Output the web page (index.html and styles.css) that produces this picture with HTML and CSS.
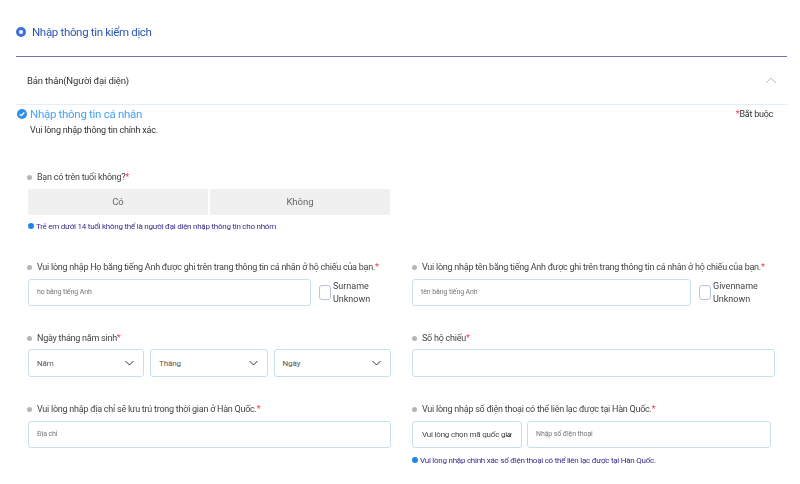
FILE: index.html
```html
<!DOCTYPE html>
<html lang="en">
<head>
  <meta charset="UTF-8" />
  <title>Nhập thông tin kiểm dịch</title>
  <link rel="stylesheet" href="styles.css">
</head>
<body>
  <div class="page">

    <!-- Step title -->
    <div class="step-title">
      <span class="step-dot"></span>
      <span>Nhập thông tin kiểm dịch</span>
    </div>

    <!-- Accordion head -->
    <div class="accordion-head">
      <span>Bản thân(Người đại diện)</span>
      <svg class="chevron-up" width="12" height="7" viewBox="0 0 12 7"><path d="M1 6l5-5 5 5" fill="none" stroke="#a9c4dc" stroke-width="1"/></svg>
    </div>

    <!-- Section head -->
    <div class="section-head">
      <div class="section-title">
        <svg width="10" height="10" viewBox="0 0 10 10"><circle cx="5" cy="5" r="5" fill="#2f8fe8"/><path d="M2.6 5.1l1.7 1.6 3-3.2" fill="none" stroke="#fff" stroke-width="1.2"/></svg>
        <span>Nhập thông tin cá nhân</span>
      </div>
      <div class="required-note"><span class="star">*</span>Bắt buộc</div>
    </div>
    <p class="section-desc">Vui lòng nhập thông tin chính xác.</p>

    <div class="age-block">
      <div class="label"><span class="bullet"></span>Bạn có trên tuổi không?<span class="star">*</span></div>
      <div class="choice-row">
        <div class="choice">Có</div>
        <div class="choice">Không</div>
      </div>
      <div class="hint"><span class="info-dot"></span>Trẻ em dưới 14 tuổi không thể là người đại diện nhập thông tin cho nhóm</div>
    </div>

    <div class="form-grid">
      <div class="field">
        <div class="label"><span class="bullet"></span>Vui lòng nhập Họ bằng tiếng Anh được ghi trên trang thông tin cá nhân ở hộ chiếu của bạn.<span class="star">*</span></div>
        <div class="name-row">
          <div class="input name-input">họ bằng tiếng Anh</div>
          <label class="unknown"><span class="checkbox"></span><span>Surname<br>Unknown</span></label>
        </div>
      </div>
      <div class="field">
        <div class="label"><span class="bullet"></span>Vui lòng nhập tên bằng tiếng Anh được ghi trên trang thông tin cá nhân ở hộ chiếu của bạn.<span class="star">*</span></div>
        <div class="name-row">
          <div class="input name-input">tên bằng tiếng Anh</div>
          <label class="unknown unknown-wide"><span class="checkbox"></span><span>Givenname<br>Unknown</span></label>
        </div>
      </div>

      <div class="field field-tall">
        <div class="label"><span class="bullet"></span>Ngày tháng năm sinh<span class="star">*</span></div>
        <div class="date-row">
          <div class="input select">Năm<svg width="9" height="6" viewBox="0 0 9 6"><path d="M.5 1l4 4 4-4" fill="none" stroke="#333" stroke-width="1"/></svg></div>
          <div class="input select">Tháng<svg width="9" height="6" viewBox="0 0 9 6"><path d="M.5 1l4 4 4-4" fill="none" stroke="#333" stroke-width="1"/></svg></div>
          <div class="input select">Ngày<svg width="9" height="6" viewBox="0 0 9 6"><path d="M.5 1l4 4 4-4" fill="none" stroke="#333" stroke-width="1"/></svg></div>
        </div>
      </div>
      <div class="field field-tall">
        <div class="label"><span class="bullet"></span>Số hộ chiếu<span class="star">*</span></div>
        <div class="input"></div>
      </div>

      <div class="field">
        <div class="label"><span class="bullet"></span>Vui lòng nhập địa chỉ sẽ lưu trú trong thời gian ở Hàn Quốc.<span class="star">*</span></div>
        <div class="input">Địa chỉ</div>
      </div>
      <div class="field">
        <div class="label"><span class="bullet"></span>Vui lòng nhập số điện thoại có thể liên lạc được tại Hàn Quốc.<span class="star">*</span></div>
        <div class="phone-row">
          <div class="input country">Vui lòng chọn mã quốc gia<svg width="6" height="5" viewBox="0 0 6 5"><path d="M.5 2l2 2 3-3.5" fill="none" stroke="#333" stroke-width="1"/></svg></div>
          <div class="input phone-input">Nhập số điện thoại</div>
        </div>
        <div class="hint phone-hint"><span class="info-dot"></span>Vui lòng nhập chính xác số điện thoại có thể liên lạc được tại Hàn Quốc.</div>
      </div>
    </div>

  </div>
</body>
</html>
```

FILE: styles.css
```css
html, body {
  margin: 0;
  padding: 0;
  background: #fff;
  overflow: hidden;
  font-family: Roboto, "Noto Sans", sans-serif;
  color: #333;
}

.page {
  width: 771px;
  height: 484px;
  margin-left: 16px;
  font-size: 9px;
  filter: blur(0.3px); /* reference is a soft, rescaled capture */
}

.step-title {
  display: flex;
  align-items: center;
  gap: 6px;
  height: 57px;
  padding-top: 8px;
  box-sizing: border-box;
  border-bottom: 1px solid #7d6fb3;
  font-size: 11.5px;
  letter-spacing: -0.33px;
  color: #2a56b0;
}

.step-dot {
  width: 4px;
  height: 4px;
  border: 3px solid #3f6fe0;
  border-radius: 50%;
}

.accordion-head {
  display: flex;
  justify-content: space-between;
  align-items: center;
  height: 48px;
  padding: 0 10px 0 11px;
  box-sizing: border-box;
  border-bottom: 1px solid #e3edf5;
  font-size: 9.5px;
  letter-spacing: -0.15px;
  color: #333;
}

.section-head {
  display: flex;
  justify-content: space-between;
  align-items: center;
  height: 17px;
  padding-right: 14px;
}

.section-title {
  display: flex;
  align-items: center;
  gap: 3px;
  padding-left: 1px;
  font-size: 11.5px;
  letter-spacing: -0.3px;
  color: #4aa3f5;
}

.required-note {
  font-size: 9px;
  letter-spacing: -0.25px;
  color: #333;
}

.star {
  color: #f03a4a;
}

.section-desc {
  margin: 0;
  padding: 1px 0 0 14px;
  line-height: 15px;
  font-size: 9px;
  letter-spacing: -0.2px;
  color: #333;
}

.age-block {
  margin: 32px 0 0 12px;
  width: 362px;
}

.label {
  display: flex;
  align-items: center;
  height: 14px;
  font-size: 9px;
  letter-spacing: -0.25px;
  color: #444;
  white-space: nowrap;
}

.age-block .label,
.field:nth-child(odd) .label {
  margin-left: -1px;
}

.bullet {
  flex-shrink: 0;
  width: 5px;
  height: 5px;
  margin-right: 5px;
  border-radius: 50%;
  background: #b5b5b5;
}

.choice-row {
  display: flex;
  gap: 2px;
  margin-top: 5px;
}

.choice {
  flex: 1;
  height: 26px;
  line-height: 26px;
  text-align: center;
  border-radius: 2px;
  background: #f0f0f0;
  font-size: 9.5px;
  color: #666;
}

.hint {
  display: flex;
  align-items: center;
  gap: 2px;
  height: 14px;
  margin-top: 4px;
  font-size: 8px;
  letter-spacing: -0.25px;
  color: #3a2a8c;
  white-space: nowrap;
}

.info-dot {
  flex-shrink: 0;
  width: 6px;
  height: 6px;
  border-radius: 50%;
  background: #1f86e8;
}

.form-grid {
  display: grid;
  grid-template-columns: 363px 363px;
  column-gap: 21px;
  row-gap: 25px;
  margin: 27px 0 0 12px;
}

.field .label {
  margin-bottom: 5px;
}

.input {
  height: 27px;
  line-height: 25px;
  padding: 0 8px;
  box-sizing: border-box;
  border: 1px solid #c5e0ec;
  border-radius: 3px;
  background: #fff;
  font-size: 7px;
  letter-spacing: -0.1px;
  color: #777;
}

.field-tall .label {
  margin-bottom: 4px;
}

.field-tall .input {
  height: 28px;
}

.name-row {
  display: flex;
  align-items: center;
  gap: 8px;
}

.name-input {
  flex: 1;
}

.unknown {
  display: flex;
  align-items: center;
  gap: 2px;
  width: 72px;
  line-height: 13px;
  font-size: 9px;
  color: #444;
}

.unknown-wide {
  width: 76px;
}

.checkbox {
  width: 10px;
  height: 13px;
  border: 1px solid #b9c4da;
  border-radius: 3px;
}

.date-row {
  display: flex;
  gap: 6px;
}

.select {
  display: flex;
  justify-content: space-between;
  align-items: center;
  flex: 1;
  padding-right: 9px;
  font-size: 8px;
  color: #555;
}

.select:first-child {
  flex: 0 0 116px;
}

.phone-row {
  display: flex;
  gap: 5px;
}

.country {
  position: relative;
  width: 110px;
  flex-shrink: 0;
  padding-left: 9px;
  overflow: hidden;
  white-space: nowrap;
  font-size: 8px;
  letter-spacing: -0.2px;
  color: #444;
}

.country svg {
  position: absolute;
  top: 11px;
  right: 9px;
}

.phone-input {
  width: 244px;
}

.phone-hint {
  margin-top: 5px;
}
```
